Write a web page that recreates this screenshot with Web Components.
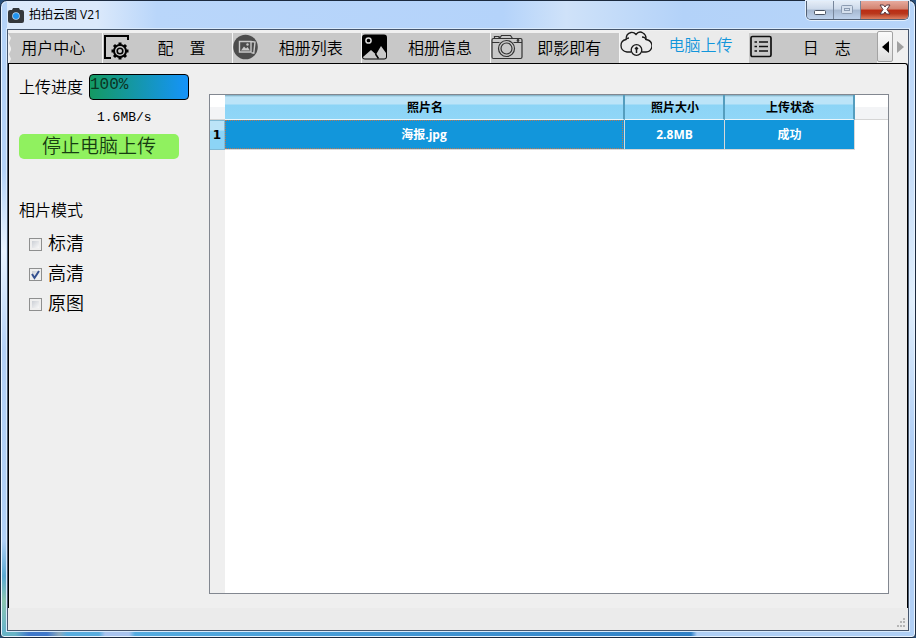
<!DOCTYPE html>
<html lang="zh-CN">
<head>
<meta charset="utf-8">
<title>拍拍云图 V21</title>
<style>
html,body{height:100%;margin:0}
body{background:#29507c;font-family:"Liberation Sans","Noto Sans CJK SC",sans-serif;color:#000;overflow:hidden}
</style>
</head>
<body>
<app-window>
  <title-bar slot="title">拍拍云图 V21</title-bar>
  <tab-strip slot="tabs">
    <tab-item class="first">用户中心</tab-item>
    <tab-item>
      <svg slot="icon" width="32" height="32" viewBox="0 0 32 32" fill="none" stroke="#000" stroke-width="2"><path d="M25 8V4H2V26H8"/><g transform="translate(17 19)"><circle r="6"/><circle r="2.800" stroke-width="1.600"/><path d="M0-6v-2.500M0 6v2.500M-6 0h-2.500M6 0h2.500M4.300-4.300l1.700-1.700M-4.300 4.300l-1.700 1.700M-4.300-4.300l-1.700-1.700M4.300 4.300l1.700 1.700" stroke-width="3"/></g></svg>
      <span>配&#x3000;置</span></tab-item>
    <tab-item>
      <svg slot="icon" width="32" height="32" viewBox="0 0 32 32"><circle cx="12.500" cy="15" r="12.300" fill="#4d4d4d"/><path d="M18.500 9.500l3.500.6-1.200 11-2.300-.3M6.500 9.500h11.500v10.500H6.500z" fill="#4d4d4d" stroke="#c9c9c9" stroke-width="1.400"/><path d="M8 18.500l3-4 2 2 1.500-1.400 2.500 3.400z" fill="#c9c9c9"/><circle cx="14.500" cy="12.500" r="1.200" fill="#c9c9c9"/></svg>
      相册列表</tab-item>
    <tab-item>
      <svg slot="icon" width="32" height="32" viewBox="0 0 32 32"><rect x="0" y="2.500" width="25" height="25" rx="3"/><circle cx="6.500" cy="8.500" r="2.600" fill="none" stroke="#d8d8d8" stroke-width="1.500"/><path d="M1 25l8-7 5 4.500 5-8.500 5 7V25q0 1.500-2 1.500H3q-2 0-2-1.500z" fill="#c9c9c9"/><path d="M13.500 22l3 4.500" stroke="#000" stroke-width="1.500" fill="none"/></svg>
      相册信息</tab-item>
    <tab-item>
      <svg slot="icon" width="32" height="32" viewBox="0 0 32 32" fill="none" stroke="#333" stroke-width="1.200"><path d="M3.500 6.500V4.500h4.500v2M8.500 6.500L10.500 3.500h9l2 3M2.500 6.500h27q1.500 0 1.500 1.500v17q0 1.500-1.500 1.500h-27Q1 26.500 1 25V8q0-1.500 1.500-1.500zM1 10.500h7.500M22.500 10.500H31"/><circle cx="15.500" cy="16.500" r="8"/><circle cx="15.500" cy="16.500" r="5.500"/><circle cx="27" cy="8.500" r=".8"/></svg>
      即影即有</tab-item>
    <tab-item active>
      <svg slot="icon" width="32" height="32" viewBox="0 0 32 32" fill="none" stroke="#1b1b1b" stroke-width="1.300"><path d="M11 23H7Q1 22 1 16.500 1 11.500 6 10.500 6 4.500 11 3.500 14 3 16 5.500 19 1.500 23 4 26.500 6 26 10.500 32 11.500 32 17 31.500 22.500 26 23H22"/><path d="M6 10.500q1-1.500 3-1.500M22 8q3.500 0 4 3"/><circle cx="16.500" cy="21" r="5.300"/><path d="M16.500 24v-6M15 20l1.500-1.500L18 20" stroke-width="1.500"/></svg>
      电脑上传</tab-item>
    <tab-item class="last">
      <svg slot="icon" width="32" height="32" viewBox="0 0 32 32" fill="none" stroke="#111" stroke-width="1.700"><rect x="2" y="4.500" width="20" height="20" rx="1.500"/><path d="M5.500 10h2.500M5.500 14.500h2.500M5.500 19h2.500M10 10h9M10 14.500h9M10 19h9"/></svg>
      <span>日&#x3000;志</span></tab-item>
  </tab-strip>
  <upload-panel slot="side"></upload-panel>
  <photo-table slot="main"></photo-table>
</app-window>

<template id="t-window">
<style>
:host{display:block;height:100vh}
.frame{box-sizing:border-box;height:100%;display:grid;grid-template-rows:28px minmax(0,1fr);padding:0 6px 6px;border:1px solid #1b2a3f;border-radius:7px 7px 4px 4px;
background:
linear-gradient(90deg,#68b4c6 0 14px,#3f78ca 28px 46px,#8da9bc 58px,#58addf 66px 98px,#a9c4ee 104px 128px,#55ace0 134px,#2f80c6 690px,#afcff5 696px) 0 100%/100% 5px no-repeat,
linear-gradient(#b4d3f8 0 170px,#eaf4ff 250px,#b3d1f7 350px,#b0d0f6 540px,#5aa9d2 575px,#8ac4b0 600px,#62b0d0) 0 0/6px 100% no-repeat,
linear-gradient(#b6d4f9,#c8def8 180px,#e1effc 300px,#b1cff5 440px);
box-shadow:inset 0 0 0 1px #e8f3ff}
.client{display:grid;grid-template-rows:33px minmax(0,1fr) 22px;border:1px solid #46566d;box-shadow:0 0 0 1px #d9eafc;background:#ebebeb;min-width:0}
.pane{display:grid;grid-template-columns:190px minmax(0,1fr);border:1px solid #000;border-bottom:0;border-top-right-radius:3px;padding:0 18px 14px 10px;background:#efefef;min-height:0}
.status{display:flex;justify-content:flex-end;align-items:flex-end;padding:2px}
</style>
<div class="frame">
  <slot name="title"></slot>
  <div class="client">
    <slot name="tabs"></slot>
    <main class="pane"><slot name="side"></slot><slot name="main"></slot></main>
    <footer class="status"><svg width="10" height="10" fill="#b5b5b5"><path d="M7 0h2v2H7zM4 3h2v2H4zM7 3h2v2H7zM1 7h2v2H1zM4 7h2v2H4zM7 7h2v2H7z"/></svg></footer>
  </div>
</div>
</template>

<template id="t-title">
<style>
:host{display:flex;align-items:flex-start;justify-content:space-between;min-width:0;background:linear-gradient(90deg,#dceafb 0,#dbe9fb 90px,#b9d6fa 150px,#b4d3fa 55%,#cfe2f9 62%,#b3d2f9 75%,#b7d5f9)}
.name{display:flex;align-items:center;gap:5px;padding:4px 0 0 1px;font:12px/20px "Open Sans","Noto Sans CJK SC",sans-serif}
.btns{display:flex;border:1px solid #515f73;border-top:0;border-radius:0 0 5px 5px;overflow:hidden;box-shadow:0 0 0 1px #e3effc}
button{height:18px;width:27px;padding:0;border:0;border-right:1px solid #77869b;background:linear-gradient(#e5edf7,#ccd9ea 45%,#a6b8d0 50%,#bed2ec);display:flex;align-items:center;justify-content:center}
.close{width:47px;border:0;background:linear-gradient(#e7aa9d,#d2826f 45%,#ba2c14 50%,#b9371c 70%,#dc8062)}
</style>
<div class="name"><svg width="16" height="17" viewBox="0 0 16 17"><path d="M2 3h2l1-2h6l1 2h2q2 0 2 2v9q0 2-2 2H2q-2 0-2-2V5q0-2 2-2z" fill="#34383c"/><circle cx="8" cy="9" r="3.800" fill="#b5dcfc"/><circle cx="8" cy="9" r="3" fill="#2194ef"/></svg><slot></slot></div>
<div class="btns">
<button aria-label="最小化"><svg width="14" height="14"><rect x="1.500" y="7.500" width="11" height="4" rx="1" fill="#fff" stroke="#4a5361"/></svg></button>
<button aria-label="最大化" disabled><svg width="14" height="14" fill="none" stroke="#8b9bb1"><rect x="1.500" y="2.500" width="11" height="8" rx="1" fill="#d4dfed"/><rect x="4.500" y="5.500" width="5" height="2"/></svg></button>
<button class="close" aria-label="关闭"><svg width="14" height="14" viewBox="0 0 14 14"><path d="M2 2h3.500L7 4l1.500-2H12L9 6.500l3 4.500H8.500L7 9l-1.500 2H2l3-4.500z" fill="#fff" stroke="#563942"/></svg></button>
</div>
</template>

<template id="t-tabs">
<style>
:host{display:flex;min-width:0;background:#f0f0f0;padding-top:1px}
nav{display:flex;flex:1;min-width:0;overflow:hidden}
button{padding:0;border:0;background:none;display:flex;align-items:center;justify-content:center}
.l{width:16px;height:31px;border:1px solid #a3a3a3;border-radius:2px;background:linear-gradient(#fafafa,#eee 50%,#dedede)}
.r{width:15px;height:31px}
</style>
<nav><slot></slot></nav>
<button class="l" aria-label="向左滚动"><svg width="7" height="12"><path d="M7 0v12L0 6z"/></svg></button>
<button class="r" aria-label="向右滚动"><svg width="7" height="12"><path d="M0 0v12l7-6z" fill="#a0a0a0"/></svg></button>
</template>

<template id="t-tab">
<style>
:host{display:flex;flex:129 1 0;min-width:0;margin-top:2px;border-right:1px solid #f5f5f5;box-sizing:border-box;background:#c8c8c8}
:host(.first){flex-grow:95;clip-path:polygon(0 0,3px 5px,1px 10px,3px 15px,3px 17px,1px 21px,3px 26px,1px 30px,100% 30px,100% 0)}
:host(.last){border:0}
:host([active]){margin-top:0;background:#ebebeb;border:0;color:#1296db}
button{display:flex;flex:1;min-width:0;align-items:center;padding:0;border:0;background:none;color:inherit;font:350 16px/24px "Liberation Sans","Noto Sans CJK SC",sans-serif;white-space:nowrap}
.t{flex:1;text-align:center}
:host .t{padding:1px 4px 0 0}
:host([active]) .t{padding-right:0}
:host([active]) button{padding-bottom:4px}
::slotted(svg){display:block;flex:none}
</style>
<button role="tab"><slot name="icon"></slot><span class="t"><slot></slot></span></button>
</template>

<template id="t-upload">
<style>
:host{display:flex;flex-direction:column;align-items:flex-start;padding-top:9px;font:350 16px/24px "Liberation Sans","Noto Sans CJK SC",sans-serif}
.row{display:flex;align-items:center;gap:6px}
.row span{padding-top:3px}
.bar{box-sizing:border-box;width:100px;height:26px;border:1px solid #000;border-radius:4px;background:linear-gradient(90deg,#149a62,#1593fa);color:#0b3322;font:16px/20px "Liberation Mono",monospace}
.speed{width:160px;padding:6px 0 4px;box-sizing:border-box;padding-left:78px;font:13px/24px "Liberation Mono",monospace}
.stop{width:160px;height:25px;padding:0;border:0;border-radius:5px;background:#90f15f;font:350 19px/24px "Liberation Sans","Noto Sans CJK SC",sans-serif;color:#173d12}
.mode{border:0;margin:40px 0 0;padding:0}
legend{padding:0 0 6px}
label{display:flex;align-items:center;gap:6px;height:30px;padding-left:10px;font-size:18px}
input{appearance:none;box-sizing:border-box;width:13px;height:13px;margin:0;border:1px solid #8e8f8f;background:linear-gradient(135deg,#cbcfd5,#f8f8f8) content-box #f4f4f4;padding:2px}
.box{display:grid}.box>*{grid-area:1/1}
.box svg{display:none;pointer-events:none}
input:checked+svg{display:block}
</style>
<div class="row"><span>上传进度</span><div class="bar" role="progressbar" aria-label="上传进度" aria-valuenow="100">100%</div></div>
<div class="speed">1.6MB/s</div>
<button class="stop">停止电脑上传</button>
<fieldset class="mode"><legend>相片模式</legend>
<label><span class="box"><input type="checkbox"></span>标清</label>
<label><span class="box"><input type="checkbox" checked><svg width="13" height="13" fill="none" stroke="#34508f" stroke-width="2"><path d="M3 6l2.500 4L10 3"/></svg></span>高清</label>
<label><span class="box"><input type="checkbox"></span>原图</label>
</fieldset>
</template>

<template id="t-table">
<style>
:host{display:block;box-sizing:border-box;margin-top:30px;border:1px solid #828790;background:linear-gradient(90deg,#efefef 15px,#fff 15px);min-width:0}
table{width:100%;table-layout:fixed;border-collapse:separate;border-spacing:0;font:bold 12px/20px "Open Sans","Noto Sans CJK SC",sans-serif;text-align:center}
th,td{padding:0;box-sizing:border-box}
thead th{height:25px;border-bottom:1px solid #d5d5d5;background:linear-gradient(#fff 50%,#f3f4f6 52%)}
thead th.c{border-right:2px solid #549dbe;border-bottom-color:#e9f5fb;background:linear-gradient(#78a9bf,#bce4f8 2px 9px,#8cd4f6 10px,#90d6f7);padding:1px 0 0 2px}
tbody th{height:30px;border:1px solid #82bad5;border-left:0;background:linear-gradient(#bce4f8 9px,#8cd4f6 10px);font-family:"DejaVu Sans",sans-serif}
td.c{color:#fff;background:#1296db;border-right:1px solid #d8d8d8;border-bottom:1px solid #d8d8d8}
td div{margin:0 1px 0 0;border:1px dotted #b37a57;line-height:27px}
.rh{width:15px}.size{width:100px}.state{width:130px}.rest{width:33px}
</style>
<table><colgroup><col class="rh"><col><col class="size"><col class="state"><col class="rest"></colgroup>
<thead><tr><th></th><th class="c">照片名</th><th class="c">照片大小</th><th class="c">上传状态</th><th></th></tr></thead>
<tbody><tr><th scope="row">1</th><td class="c"><div>海报.jpg</div></td><td class="c">2.8MB</td><td class="c">成功</td><td></td></tr></tbody></table>
</template>

<script>
for (const [tag, id] of [['app-window','t-window'],['title-bar','t-title'],['tab-strip','t-tabs'],['tab-item','t-tab'],['upload-panel','t-upload'],['photo-table','t-table']]) {
  customElements.define(tag, class extends HTMLElement {
    constructor() {
      super();
      this.attachShadow({mode: 'open'}).append(document.getElementById(id).content.cloneNode(true));
    }
  });
}
</script>
</body>
</html>
